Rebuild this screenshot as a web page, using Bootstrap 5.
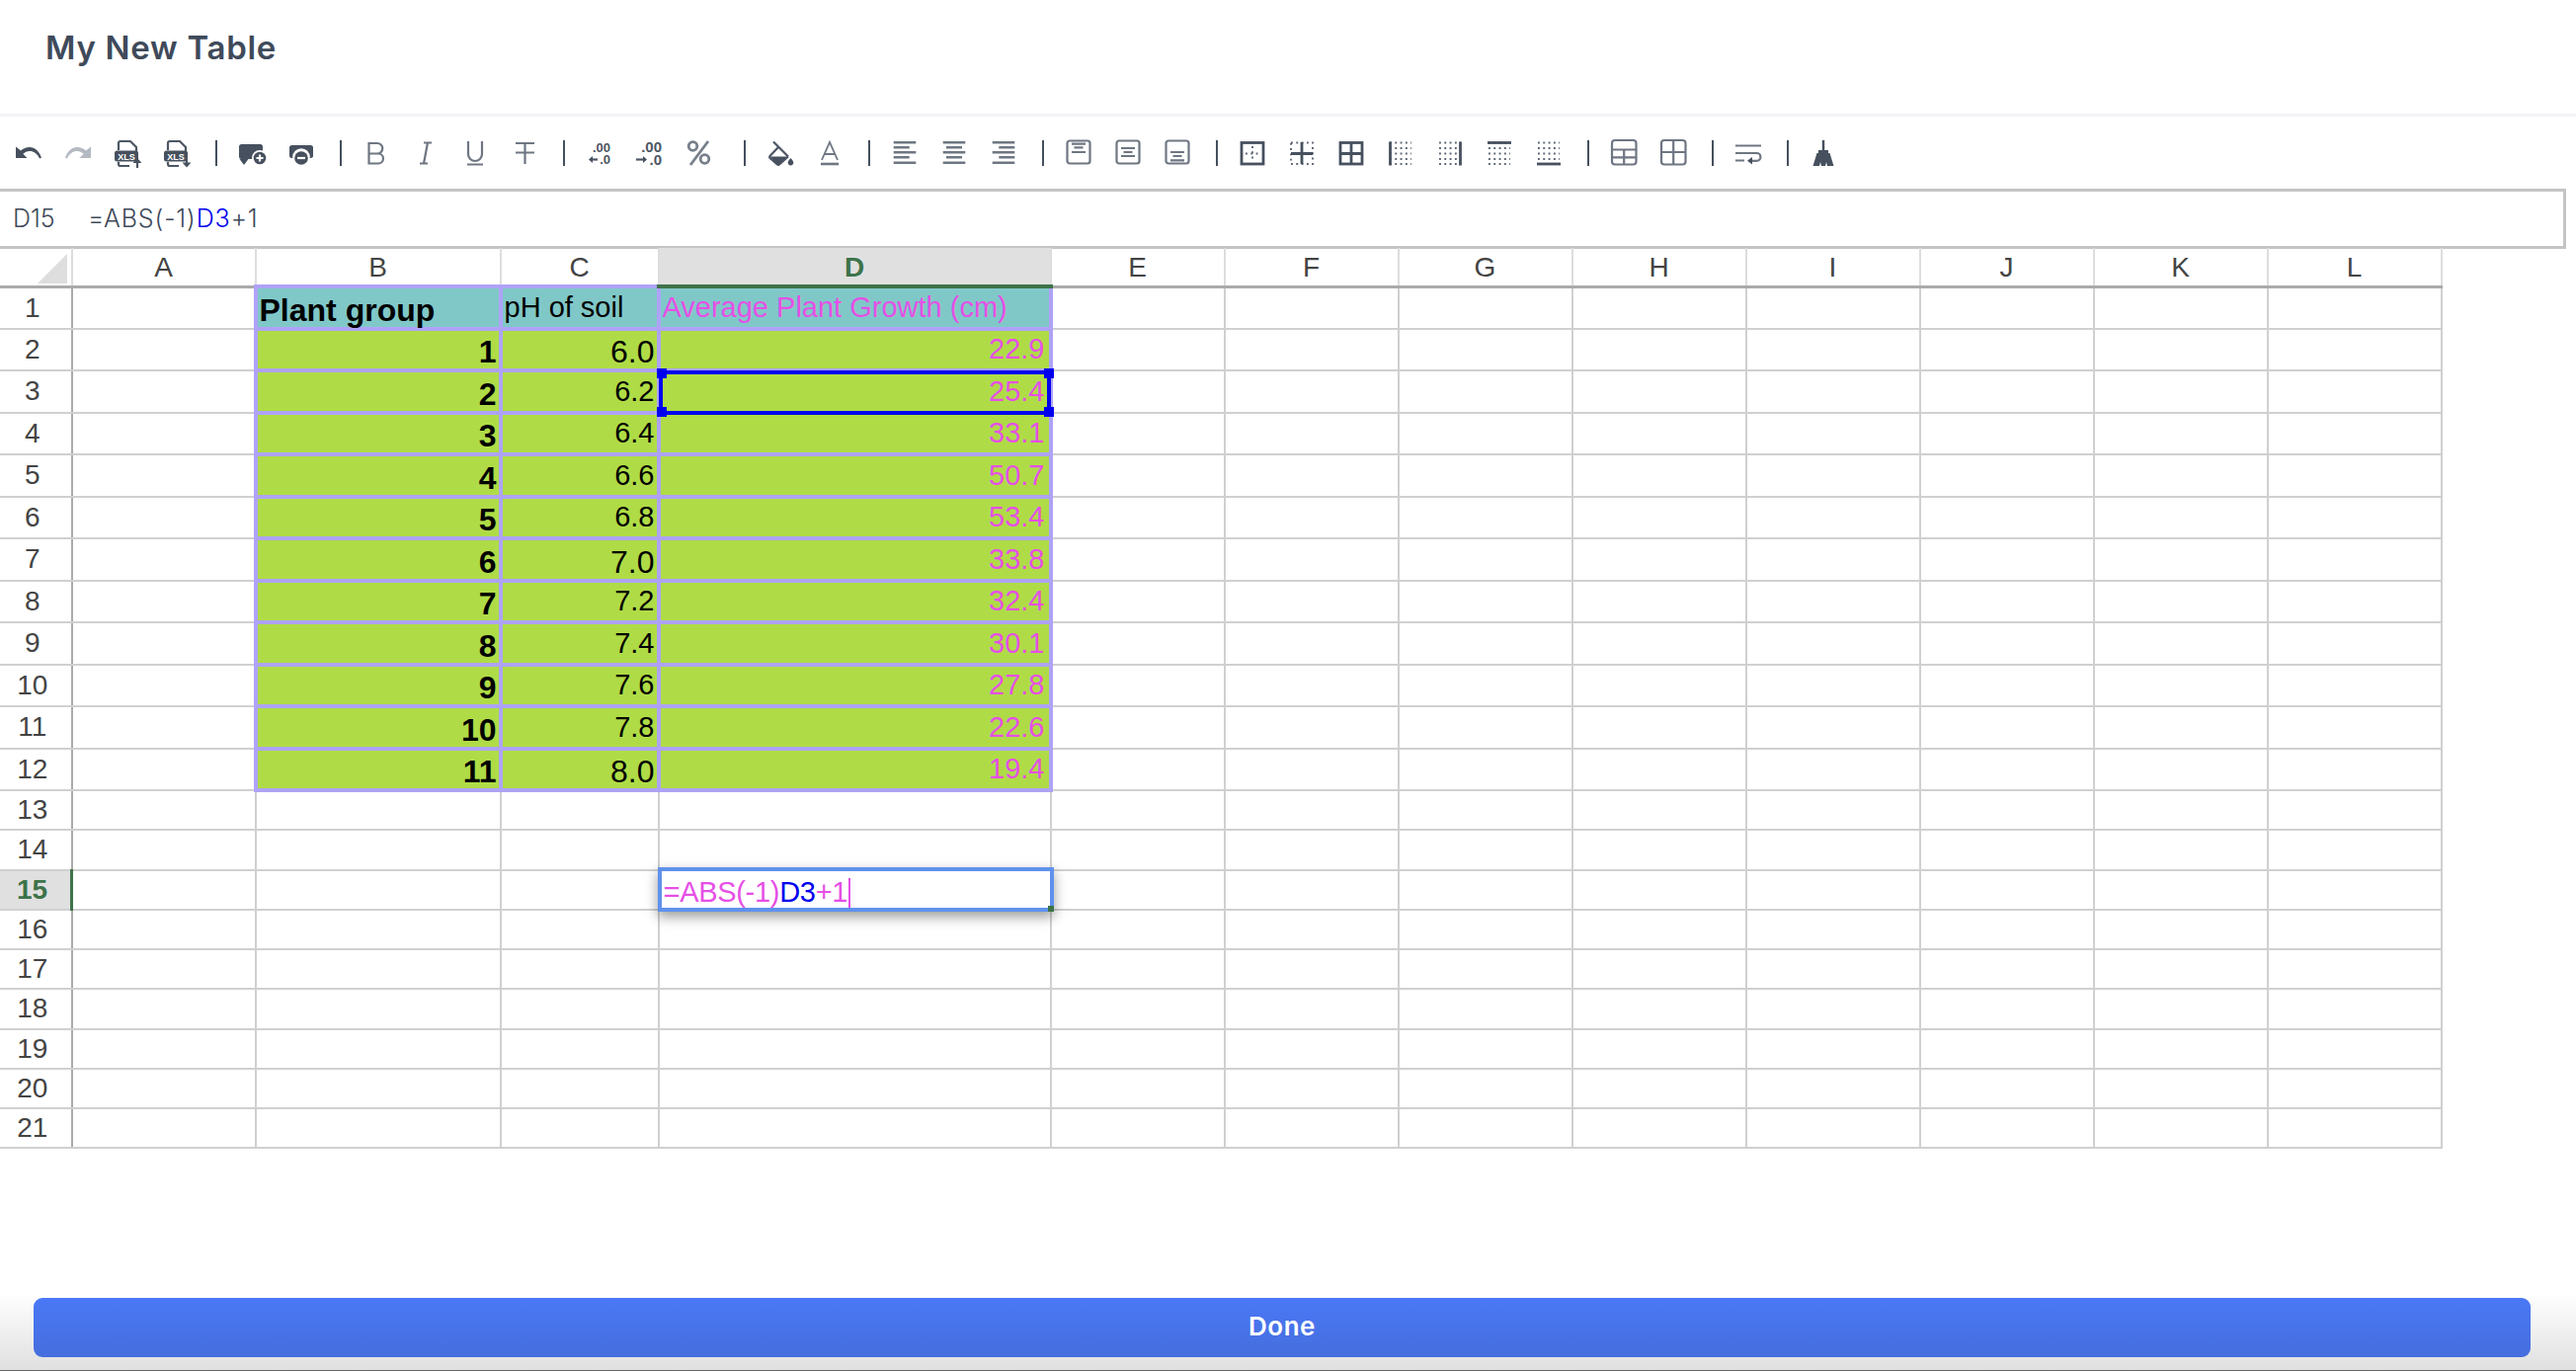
<!DOCTYPE html>
<html lang="en">
<head>
    <meta charset="UTF-8">
    <meta name="viewport" content="width=device-width, initial-scale=1.0">
    <title>My New Table</title>
    <link href="https://cdn.jsdelivr.net/npm/bootstrap@5.3.3/dist/css/bootstrap.min.css" rel="stylesheet">
    <style>
        html, body { height: 100%; }
        body { font-family: "Liberation Sans", sans-serif; color: #444; background: #fff; overflow: hidden; }
        .page-head { height: 118px; padding: 27px 0 0 46px; border-bottom: 3px solid #f2f2f7; }
        .page-title { font-family: Inter, sans-serif; font-weight: 600; font-size: 33px; line-height: 42px; color: #3f4a5a; margin: 0; letter-spacing: .7px; }
        .tools { height: 73px; padding-left: 4px; }
        .tool { width: 50px; height: 50px; flex: none; }
        .tool svg { width: 30px; height: 30px; fill: none; stroke: #4d5664; stroke-width: 2.2; }
        .lite { stroke: #6e7682; }
        svg text { font-family: "Liberation Sans", sans-serif; font-weight: 700; stroke: none; }
        .solid { fill: #47505e; stroke: none; }
        .thin { stroke-width: 2.8; stroke: #47505e; }
        .dot { stroke-dasharray: 1.9 3.4; stroke: #5d6673; stroke-width: 1.9; fill: none; }
        .tool-sep { width: 2px; height: 26px; background: #45505e; margin: 0 10px 0 14px; flex: none; }
        .tool-sep.wide { margin-left: 21px; }
        .formula-bar { width: 2598px; height: 61px; border: 3px solid #c4c4c4; border-left: 0; padding-left: 13px; font-family: Inter, sans-serif; font-weight: 300; font-size: 25px; color: #3f4a5a; }
        .cell-ref { width: 76px; }
        .formula-text { letter-spacing: .9px; }
        .ref-blue { color: #0000ee; }
        .sheet { table-layout: fixed; width: 2471.5px; border-collapse: collapse; margin-top: -1px; }
        .sheet th { font-weight: 400; font-size: 28px; text-align: center; height: 39px; line-height: 1; padding: 2px 0 0; border-right: 2px solid #ddd; border-bottom: 3px solid #aaa; }
        .sheet th.corner { text-align: right; vertical-align: bottom; padding: 0 4px 0 0; }
        .corner svg { display: block; margin-left: auto; margin-bottom: 2px; }
        .sheet th.on { background: #e0e0e0; color: #3d7349; font-weight: 700; border-bottom: 4px solid #3d7349; }
        .sheet td { border: 2px solid #d0d0d0; padding: 0 2px 5px; vertical-align: bottom; font-size: 29px; line-height: 1; color: #000; white-space: nowrap; }
        .sheet tr.tall td, .sheet tr.tall th { height: 42.5px; }
        .sheet tr.low td, .sheet tr.low th { height: 40.25px; }
        .sheet tbody th { border-right: 2px solid #aaa; border-bottom: 2px solid #d0d0d0; border-left: 0; padding: 0 6px 0 0; }
        .sheet tbody th.on { border-right: 3px solid #3d7349; border-bottom: 2px solid #d0d0d0; }
        .sheet td.data { border: 4px solid #aea3f7; text-align: right; }
        .sheet td.top-row { background: #80c8c8; text-align: left; }
        .sheet td.green-row { background: #afdc46; }
        .sheet td.big { font-size: 32px; padding-bottom: 1px; }
        .sheet td.strong { font-weight: 700; }
        .sheet td.pink { color: #e64fe6; }
        .sheet td.green-row.pink { padding-right: 4px; }
        .sheet td.holder { position: relative; }
        .picked { position: absolute; left: -2px; right: -2px; top: -2px; bottom: -4px; border: 4px solid #0000ee; pointer-events: none; }
        .grip { position: absolute; width: 10px; height: 10px; background: #0000ee; }
        .grip.tl { left: -6px; top: -6px; }
        .grip.tr { right: -7px; top: -6px; }
        .grip.bl { left: -6px; bottom: -6px; }
        .grip.br { right: -7px; bottom: -6px; }
        .editor { position: absolute; left: -2px; top: -4px; width: 401px; height: 45px; border: 4px solid #5f91ec; background: #fff; padding: 5px 0 0 2px; color: #e64fe6; box-shadow: 0 5px 12px rgba(0, 0, 0, .4); font-size: 29px; line-height: 32px; letter-spacing: -.3px; text-align: left; }
        .editor .caret-bar { display: inline-block; width: 2px; height: 30px; background: #e64fe6; vertical-align: -6px; margin-left: 1px; }
        .editor .grip-end { position: absolute; right: -4px; bottom: -4px; width: 6px; height: 6px; background: #3d7349; }
        .page-foot { margin-top: auto; height: 88px; padding: 14px 46px 13px 34px; background: linear-gradient(#fff 0%, #fff 10%, #e0e0e0 100%); border-bottom: 1px solid #666; }
        .done-btn { height: 60px; padding: 0 0 3px; border: 0; border-radius: 9px; background: linear-gradient(#4a78f6, #456edd); color: #fff; font-family: Inter, sans-serif; font-weight: 600; font-size: 26px; letter-spacing: .5px; }
    </style>
</head>
<body class="d-flex flex-column">
    <svg class="d-none">
        <symbol id="dots" viewBox="0 0 30 30"><path class="dot" d="M4 4.500h22M4 10h22M4 15.500h22M4 21h22M4 26h22"/></symbol>
        <symbol id="xls" viewBox="0 0 30 30">
            <path d="M6 12V5a2 2 0 0 1 2-2h10l6 6v4M6 24v2a2 2 0 0 0 2 2h9"/>
            <rect class="solid" x="2" y="12.500" width="24" height="11" rx="2.500"/>
            <text x="14" y="21.500" font-size="9" text-anchor="middle" style="fill:#fff">XLS</text>
        </symbol>
    </svg>

    <header class="page-head">
        <h1 class="page-title">My New Table</h1>
    </header>

    <div class="tools d-flex align-items-center">
        <button type="button" class="tool btn border-0 p-0 d-flex align-items-center justify-content-center"><svg viewBox="0 0 30 30"><path class="solid" d="M2 8.500V20h11.500l-4.200-4.200C11.300 14.200 13.300 13 16 13c4 0 8 2.500 10 7.500l2-.8C25.500 12.500 21 9 16 9c-3.600 0-6.500 1.300-9 3.500z"/></svg></button>
        <button type="button" class="tool btn border-0 p-0 d-flex align-items-center justify-content-center"><svg viewBox="0 0 30 30"><path style="fill:#b4bac2;stroke:none" d="M28 8.500V20H16.500l4.200-4.200C18.700 14.200 16.700 13 14 13c-4 0-8 2.500-10 7.500l-2-.8C4.500 12.500 9 9 14 9c3.600 0 6.500 1.300 9 3.500z"/></svg></button>
        <button type="button" class="tool btn border-0 p-0 d-flex align-items-center justify-content-center"><svg viewBox="0 0 30 30"><use href="#xls"/><path d="M25 30v-7"/><path class="solid" d="M20.500 25l4.500-5 4.500 5z"/></svg></button>
        <button type="button" class="tool btn border-0 p-0 d-flex align-items-center justify-content-center"><svg viewBox="0 0 30 30"><use href="#xls"/><path d="M25 20v6"/><path class="solid" d="M20.500 24.500l4.500 5 4.500-5z"/></svg></button>
        <span class="tool-sep"></span>
        <button type="button" class="tool btn border-0 p-0 d-flex align-items-center justify-content-center"><svg viewBox="0 0 30 30"><rect class="solid" x="2" y="6" width="24" height="15" rx="2.500"/><path class="solid" d="M2.500 21h9L7 27z"/><circle cx="23" cy="20" r="8" style="fill:#fff;stroke:none"/><circle class="solid" cx="23" cy="20" r="6.300"/><path d="M23 16.500v7M19.500 20h7" style="stroke:#fff"/></svg></button>
        <button type="button" class="tool btn border-0 p-0 d-flex align-items-center justify-content-center"><svg viewBox="0 0 30 30"><rect class="solid" x="3" y="7" width="24" height="13" rx="2.500"/><circle cx="15" cy="19" r="8.800" style="fill:#fff;stroke:none"/><circle class="solid" cx="15" cy="20" r="6.800"/><path d="M11 20h8" style="stroke:#fff"/></svg></button>
        <span class="tool-sep"></span>
        <button type="button" class="tool btn border-0 p-0 d-flex align-items-center justify-content-center"><svg viewBox="0 0 30 30"><path class="lite" d="M7.500 5H16a5 5 0 0 1 0 10.500H7.500zM7.500 15.500H17a5 5 0 0 1 0 10H7.500z"/></svg></button>
        <button type="button" class="tool btn border-0 p-0 d-flex align-items-center justify-content-center"><svg viewBox="0 0 30 30"><path class="lite" d="M13 4.500h8M9 25.500h8M17 4.500l-4 21"/></svg></button>
        <button type="button" class="tool btn border-0 p-0 d-flex align-items-center justify-content-center"><svg viewBox="0 0 30 30"><path class="lite" d="M8 3v13a7 7 0 0 0 14 0V3M7 26.500h16"/></svg></button>
        <button type="button" class="tool btn border-0 p-0 d-flex align-items-center justify-content-center"><svg viewBox="0 0 30 30"><path class="lite" d="M6 5h19M6 14.500h19M15.500 5v21"/></svg></button>
        <span class="tool-sep"></span>
        <button type="button" class="tool btn border-0 p-0 d-flex align-items-center justify-content-center"><svg viewBox="0 0 30 30"><text x="26" y="14" font-size="13" text-anchor="end" style="fill:#4d5664">.00</text><text x="26" y="26" font-size="13" text-anchor="end" style="fill:#4d5664">.0</text><path d="M13 21.500H6"/><path class="solid" d="M4 21.500l4-3.500v7z"/></svg></button>
        <button type="button" class="tool btn border-0 p-0 d-flex align-items-center justify-content-center"><svg viewBox="0 0 30 30"><text x="28" y="14" font-size="15" text-anchor="end" style="fill:#4d5664">.00</text><text x="28" y="27" font-size="15" text-anchor="end" style="fill:#4d5664">.0</text><path d="M2 21.500h7"/><path class="solid" d="M13 21.500l-4-3.500v7z"/></svg></button>
        <button type="button" class="tool btn border-0 p-0 d-flex align-items-center justify-content-center"><svg viewBox="0 0 30 30"><g style="stroke:#777f8b;stroke-width:2.800"><circle cx="9.500" cy="8" r="4.300"/><circle cx="21.500" cy="21" r="4.300"/><path d="M25 3L7 27"/></g></svg></button>
        <span class="tool-sep wide"></span>
        <button type="button" class="tool btn border-0 p-0 d-flex align-items-center justify-content-center"><svg viewBox="0 0 30 30"><path d="M8 3.500l15 15M13 9L4.500 18a1.500 1.500 0 0 0 0 2l7.500 6.500a1.500 1.500 0 0 0 2 0L23 18.500"/><path class="solid" d="M4.500 18.500h18l-8.500 8.500a1.500 1.500 0 0 1-2 0z"/><path class="solid" d="M25.500 20c1.500 2 2.800 3.200 2.800 4.600a2.800 2.800 0 0 1-5.600 0c0-1.400 1.300-2.600 2.800-4.600z"/></svg></button>
        <button type="button" class="tool btn border-0 p-0 d-flex align-items-center justify-content-center"><svg viewBox="0 0 30 30"><path class="lite" d="M7 22L15 4l8 18M10 16h10" style="stroke-width:1.800"/><path class="lite" d="M6 26h18" style="stroke-width:2.600"/></svg></button>
        <span class="tool-sep"></span>
        <button type="button" class="tool btn border-0 p-0 d-flex align-items-center justify-content-center"><svg viewBox="0 0 30 30"><path class="lite" d="M3.700 4.300h22.600M3.700 9.300h16M3.700 14.300h22.600M3.700 19.300h16M3.700 24.700h22.600" style="stroke-width:2.500"/></svg></button>
        <button type="button" class="tool btn border-0 p-0 d-flex align-items-center justify-content-center"><svg viewBox="0 0 30 30"><path class="lite" d="M3.700 4.300h22.600M7 9.300h16M3.700 14.300h22.600M7 19.300h16M3.700 24.700h22.600" style="stroke-width:2.500"/></svg></button>
        <button type="button" class="tool btn border-0 p-0 d-flex align-items-center justify-content-center"><svg viewBox="0 0 30 30"><path class="lite" d="M3.700 4.300h22.600M10.300 9.300h16M3.700 14.300h22.600M10.300 19.300h16M3.700 24.700h22.600" style="stroke-width:2.500"/></svg></button>
        <span class="tool-sep"></span>
        <button type="button" class="tool btn border-0 p-0 d-flex align-items-center justify-content-center"><svg viewBox="0 0 30 30"><rect class="lite" x="3.500" y="2.500" width="23" height="23" rx="2.500"/><path class="lite" d="M8 5.700h14M10.500 9.300h9M8 14h14"/></svg></button>
        <button type="button" class="tool btn border-0 p-0 d-flex align-items-center justify-content-center"><svg viewBox="0 0 30 30"><rect class="lite" x="3.500" y="2.500" width="23" height="23" rx="2.500"/><path class="lite" d="M8 10h14M10.500 14h9M8 18h14"/></svg></button>
        <button type="button" class="tool btn border-0 p-0 d-flex align-items-center justify-content-center"><svg viewBox="0 0 30 30"><rect class="lite" x="3.500" y="2.500" width="23" height="23" rx="2.500"/><path class="lite" d="M8 14h14M10.500 18h9M8 22.300h14"/></svg></button>
        <span class="tool-sep"></span>
        <button type="button" class="tool btn border-0 p-0 d-flex align-items-center justify-content-center"><svg viewBox="0 0 30 30"><rect class="thin" x="4" y="4.500" width="22" height="21.500"/><path class="dot" d="M15 8v15M8 15.500h15"/></svg></button>
        <button type="button" class="tool btn border-0 p-0 d-flex align-items-center justify-content-center"><svg viewBox="0 0 30 30"><rect class="dot" x="4" y="4.500" width="22" height="21.500"/><path class="thin" d="M15 4v22M4 15.500h22"/></svg></button>
        <button type="button" class="tool btn border-0 p-0 d-flex align-items-center justify-content-center"><svg viewBox="0 0 30 30"><rect class="thin" x="4" y="4.500" width="22" height="21.500"/><path class="thin" d="M15 4v22M4 15.500h22"/></svg></button>
        <button type="button" class="tool btn border-0 p-0 d-flex align-items-center justify-content-center"><svg viewBox="0 0 30 30"><use href="#dots"/><path class="thin" d="M4.500 3.500v24"/></svg></button>
        <button type="button" class="tool btn border-0 p-0 d-flex align-items-center justify-content-center"><svg viewBox="0 0 30 30"><use href="#dots"/><path class="thin" d="M25.500 3.500v24"/></svg></button>
        <button type="button" class="tool btn border-0 p-0 d-flex align-items-center justify-content-center"><svg viewBox="0 0 30 30"><use href="#dots"/><path class="thin" d="M3 4.500h24"/></svg></button>
        <button type="button" class="tool btn border-0 p-0 d-flex align-items-center justify-content-center"><svg viewBox="0 0 30 30"><use href="#dots"/><path class="thin" d="M3 26h24"/></svg></button>
        <span class="tool-sep"></span>
        <button type="button" class="tool btn border-0 p-0 d-flex align-items-center justify-content-center"><svg viewBox="0 0 30 30"><rect class="lite" x="3" y="2" width="24.500" height="24.500" rx="3"/><path class="lite" d="M3 11.500h24.500M3 19.300h24.500M15.200 11.500v15"/></svg></button>
        <button type="button" class="tool btn border-0 p-0 d-flex align-items-center justify-content-center"><svg viewBox="0 0 30 30"><rect class="lite" x="3" y="2" width="24.500" height="24.500" rx="3"/><path class="lite" d="M3 14h24.500M15.200 2v24.500"/></svg></button>
        <span class="tool-sep"></span>
        <button type="button" class="tool btn border-0 p-0 d-flex align-items-center justify-content-center"><svg viewBox="0 0 30 30"><path class="lite" d="M2 7.500h26M2 15h21.500a3.900 3.900 0 0 1 0 7.800H17M2 22.500h9"/><path class="solid" d="M19 19l-5 3.800 5 3.800z"/></svg></button>
        <span class="tool-sep"></span>
        <button type="button" class="tool btn border-0 p-0 d-flex align-items-center justify-content-center"><svg viewBox="0 0 30 30"><path d="M15 2v11" style="stroke-width:2.500;stroke:#47505e"/><path class="solid" d="M10 12h10v3h1.500L25.500 28H19l-1-4-1 4h-4l-1-4-1 4H4.500L8.500 15H10z"/></svg></button>
    </div>

    <div class="formula-bar d-flex align-items-center">
        <span class="cell-ref">D15</span>
        <span class="formula-text">=ABS(-1)<span class="ref-blue">D3</span>+1</span>
    </div>

    <table class="sheet">
        <colgroup id="sheetCols"></colgroup>
        <thead>
            <tr id="colHeads">
                <th class="corner"><svg width="30" height="30"><path d="M30 0v30H0z" fill="#dedede"/></svg></th>
            </tr>
        </thead>
        <tbody id="sheetBody"></tbody>
    </table>

    <footer class="page-foot">
        <button type="button" class="btn btn-primary done-btn w-100">Done</button>
    </footer>

    <script src="https://cdn.jsdelivr.net/npm/bootstrap@5.3.3/dist/js/bootstrap.bundle.min.js"></script>
    <script>
        const widths = [72.5, 186, 248, 160, 397, 176, 176, 176, 176, 176, 176, 176, 176];
        const letters = 'ABCDEFGHIJKL'.split('');
        const rows = [
            ['1', '6.0', '22.9'], ['2', '6.2', '25.4'], ['3', '6.4', '33.1'], ['4', '6.6', '50.7'],
            ['5', '6.8', '53.4'], ['6', '7.0', '33.8'], ['7', '7.2', '32.4'], ['8', '7.4', '30.1'],
            ['9', '7.6', '27.8'], ['10', '7.8', '22.6'], ['11', '8.0', '19.4']
        ];

        widths.forEach(w => {
            const col = document.createElement('col');
            col.style.width = w + 'px';
            document.getElementById('sheetCols').appendChild(col);
        });

        letters.forEach(l => {
            const th = document.createElement('th');
            th.textContent = l;
            if (l === 'D') th.className = 'on';
            document.getElementById('colHeads').appendChild(th);
        });

        const body = document.getElementById('sheetBody');
        for (let r = 1; r <= 21; r++) {
            const tr = body.insertRow();
            tr.className = r <= 12 ? 'tall' : 'low';
            const head = document.createElement('th');
            head.textContent = r;
            if (r === 15) head.className = 'on';
            tr.appendChild(head);

            letters.forEach((l, i) => {
                const td = tr.insertCell();
                if (r > 12 || i === 0 || i > 3) return;
                td.classList.add('data', r === 1 ? 'top-row' : 'green-row');
                if (r === 1) {
                    td.textContent = ['Plant group', 'pH of soil', 'Average Plant Growth (cm)'][i - 1];
                    if (i === 1) td.classList.add('big', 'strong');
                    if (i === 3) td.classList.add('pink');
                } else {
                    const text = rows[r - 2][i - 1];
                    td.textContent = text;
                    if (i === 1) td.classList.add('big', 'strong');
                    if (i === 2 && text.endsWith('.0')) td.classList.add('big');
                    if (i === 3) td.classList.add('pink');
                }
            });
        }

        // selected cell D3
        const d3 = body.rows[2].cells[4];
        d3.classList.add('holder');
        d3.insertAdjacentHTML('beforeend', '<div class="picked"><i class="grip tl"></i><i class="grip tr"></i><i class="grip bl"></i><i class="grip br"></i></div>');

        // open editor on D15
        const d15 = body.rows[14].cells[4];
        d15.classList.add('holder');
        d15.innerHTML = '<div class="editor">=ABS(-1)<span class="ref-blue">D3</span>+1<span class="caret-bar"></span><i class="grip-end"></i></div>';
    </script>
</body>
</html>
